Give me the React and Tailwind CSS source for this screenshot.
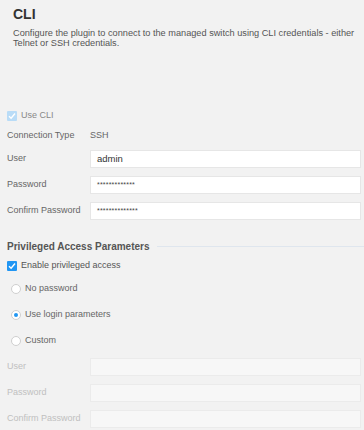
import React from 'react';

function Check({ checked = true, disabled = false }) {
  const bg = disabled ? 'bg-[#b9dcf7]' : 'bg-[#2196f3]';
  return (
    <span className={`w-[10px] h-[10px] rounded-[1px] flex items-center justify-center shrink-0 ${bg}`}>
      {checked && (
        <svg width="8" height="8" viewBox="0 0 8 8">
          <path d="M1 4.2 L3.1 6.2 L7 1.5" fill="none" stroke="white" strokeWidth="1.4" />
        </svg>
      )}
    </span>
  );
}

function Radio({ selected, label }) {
  return (
    <div className="h-[26px] flex items-center pl-[4px]">
      <span className="w-[10px] h-[10px] rounded-full border border-[#cfcfcf] bg-white flex items-center justify-center shrink-0">
        {selected && <span className="w-[4px] h-[4px] rounded-full bg-[#2196f3]" />}
      </span>
      <span className="ml-[4px] text-[#666]">{label}</span>
    </div>
  );
}

function Field({ label, value, disabled = false, small = false }) {
  return (
    <div className="h-[26px] flex items-center">
      <span className={`w-[83px] shrink-0 ${disabled ? 'text-[#c0c0c0]' : 'text-[#666]'}`}>{label}</span>
      <div
        className={`h-[18px] flex-1 flex items-center px-[6px] border ${
          disabled ? 'bg-[#f7f7f7] border-[#ebebeb]' : 'bg-white border-[#e6e6e6]'
        }`}
      >
        <span className={small ? 'text-[7px] tracking-[0.2px] text-[#444]' : 'text-[9.5px] text-[#333]'}>{value}</span>
      </div>
    </div>
  );
}

export default function App() {
  return (
    <div className="w-[364px] h-[430px] overflow-hidden bg-[#f2f2f2] text-[9px] leading-[11px] font-['Liberation_Sans',Arial,sans-serif]">
      {/* Header */}
      <div className="pl-[13px] pr-[6px] pt-[7px]">
        <div className="text-[14px] leading-[14px] font-bold text-[#333]">CLI</div>
        <p className="mt-[6.5px] text-[9.2px] text-[#555] leading-[10.5px]">
          Configure the plugin to connect to the managed switch using CLI credentials - either Telnet or SSH credentials.
        </p>
      </div>

      <div className="mt-[57px] pl-[7px] pr-[3px]">
        <div className="h-[20px] flex items-center">
          <Check disabled />
          <span className="ml-[4px] text-[#888]">Use CLI</span>
        </div>
        <div className="h-[20px] flex items-center">
          <span className="w-[83px] text-[#666]">Connection Type</span>
          <span className="text-[#666]">SSH</span>
        </div>
        <Field label="User" value="admin" />
        <Field label="Password" value="*************" small />
        <Field label="Confirm Password" value="**************" small />

        {/* Privileged section */}
        <div className="h-[22px] mt-[12px] flex items-center">
          <span className="font-bold text-[10px] text-[#555] whitespace-nowrap">Privileged Access Parameters</span>
          <div className="flex-1 h-px bg-[#dfe6ee] ml-[7px] -mr-[3px]" />
        </div>
        <div className="h-[16px] flex items-center">
          <Check />
          <span className="ml-[4px] text-[#555]">Enable privileged access</span>
        </div>
        <div className="mt-[2px]">
          <Radio label="No password" />
          <Radio label="Use login parameters" selected />
          <Radio label="Custom" />
        </div>
        <Field label="User" value="" disabled />
        <Field label="Password" value="" disabled />
        <Field label="Confirm Password" value="" disabled />
      </div>
    </div>
  );
}
